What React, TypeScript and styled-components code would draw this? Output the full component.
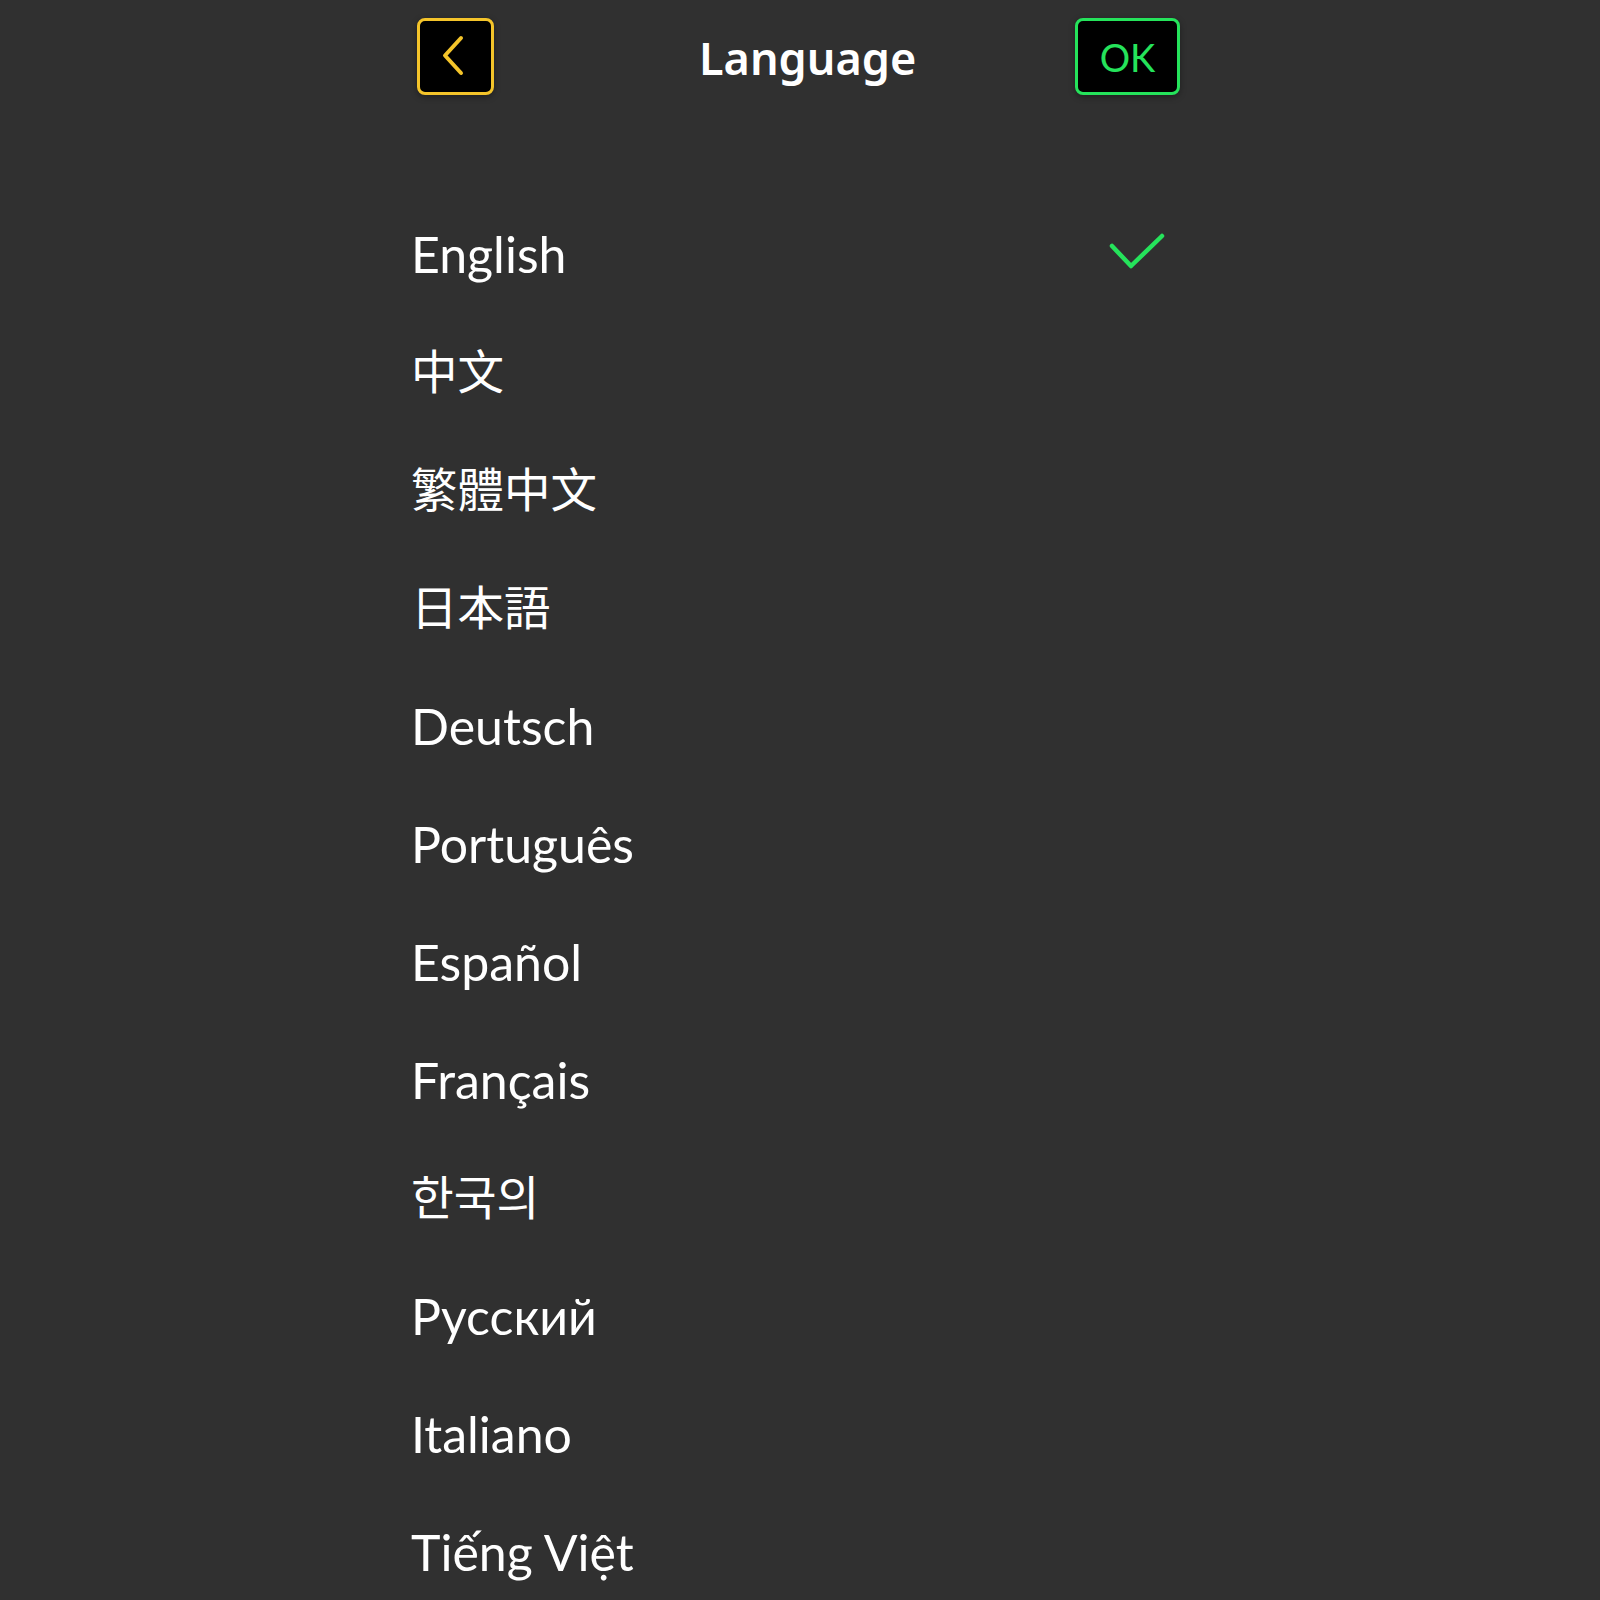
import { useState } from "react";
import styled, { createGlobalStyle } from "styled-components";

const GlobalStyle = createGlobalStyle`
  html, body {
    margin: 0;
    padding: 0;
    background: #303030;
  }
  body {
    font-family: Lato, "Noto Sans", "Noto Sans CJK SC", sans-serif;
  }
`;

interface Language {
  code: string;
  label: string;
}

const languages: Language[] = [
  { code: "en", label: "English" },
  { code: "zh-CN", label: "中文" },
  { code: "zh-TW", label: "繁體中文" },
  { code: "ja", label: "日本語" },
  { code: "de", label: "Deutsch" },
  { code: "pt", label: "Português" },
  { code: "es", label: "Español" },
  { code: "fr", label: "Français" },
  { code: "ko", label: "한국의" },
  { code: "ru", label: "Русский" },
  { code: "it", label: "Italiano" },
  { code: "vi", label: "Tiếng Việt" },
];

const cjkFont: Record<string, string> = {
  "zh-CN": '"Noto Sans CJK SC"',
  "zh-TW": '"Noto Sans CJK TC"',
  ja: '"Noto Sans CJK JP"',
  ko: '"Noto Sans CJK KR"',
};

const Screen = styled.div`
  width: 778px;
  margin: 0 auto;
  min-height: 1600px;
  background: #303030;
`;

const Header = styled.header`
  display: flex;
  align-items: center;
  padding: 17px 9px 0 6px;
  height: 78px;
`;

const IconButton = styled.button<{ $color: string; $width: number }>`
  display: flex;
  align-items: center;
  justify-content: center;
  box-sizing: border-box;
  width: ${(p) => p.$width}px;
  height: 77px;
  background: #000;
  border: 3px solid ${(p) => p.$color};
  border-radius: 8px;
  color: ${(p) => p.$color};
  box-shadow: 0 2px 6px rgba(0, 0, 0, 0.35);
  padding: 0;
  cursor: pointer;
`;

const OkButton = styled(IconButton)`
  margin-left: auto;
  font-family: Lato, "Noto Sans", sans-serif;
  font-size: 38px;
  font-weight: 400;
  padding-top: 1px;
`;

const Title = styled.h1`
  margin: 4px 0 0 205px;
  color: #fff;
  font-family: "Noto Sans", sans-serif;
  font-weight: 600;
  font-size: 45px;
  line-height: 1;
  padding-bottom: 2px;
`;

const List = styled.ul`
  list-style: none;
  margin: 100px 0 0;
  padding: 0;
`;

const Row = styled.li<{ $font?: string }>`
  display: flex;
  align-items: center;
  justify-content: space-between;
  height: 118px;
  padding: 0 24px 0 0;
  color: #fff;
  font-family: ${(p) => (p.$font ? `${p.$font}, sans-serif` : `Lato, "Noto Sans", sans-serif`)};
  font-size: ${(p) => (p.$font ? 46.5 : 50)}px;
  cursor: pointer;
`;

const Label = styled.span<{ $cjk: boolean }>`
  padding-bottom: ${(p) => (p.$cjk ? 8 : 0)}px;
`;

const Check = styled.svg`
  width: 56px;
  height: 38px;
  margin-top: -4px;
`;

const App = () => {
  const [selected, setSelected] = useState("en");

  return (
    <>
      <GlobalStyle />
      <Screen>
        <Header>
          <IconButton $color="#f4c42a" $width={77} aria-label="Back">
            <svg width="30" height="44" viewBox="0 0 30 44" fill="none" style={{ marginLeft: -6 }}>
              <path d="M23 4 L7 21.5 L23 39" stroke="#f4c42a" strokeWidth="4" strokeLinecap="round" strokeLinejoin="round" />
            </svg>
          </IconButton>
          <Title>Language</Title>
          <OkButton $color="#25e35b" $width={105}>OK</OkButton>
        </Header>
        <List>
          {languages.map((lang) => (
            <Row key={lang.code} lang={lang.code} $font={cjkFont[lang.code]} onClick={() => setSelected(lang.code)}>
              <Label $cjk={!!cjkFont[lang.code]}>{lang.label}</Label>
              {selected === lang.code && (
                <Check viewBox="0 0 56 38" fill="none">
                  <path d="M3 13 L22 33 L53 3" stroke="#25e35b" strokeWidth="4.5" strokeLinecap="round" strokeLinejoin="round" />
                </Check>
              )}
            </Row>
          ))}
        </List>
      </Screen>
    </>
  );
};

export default App;
